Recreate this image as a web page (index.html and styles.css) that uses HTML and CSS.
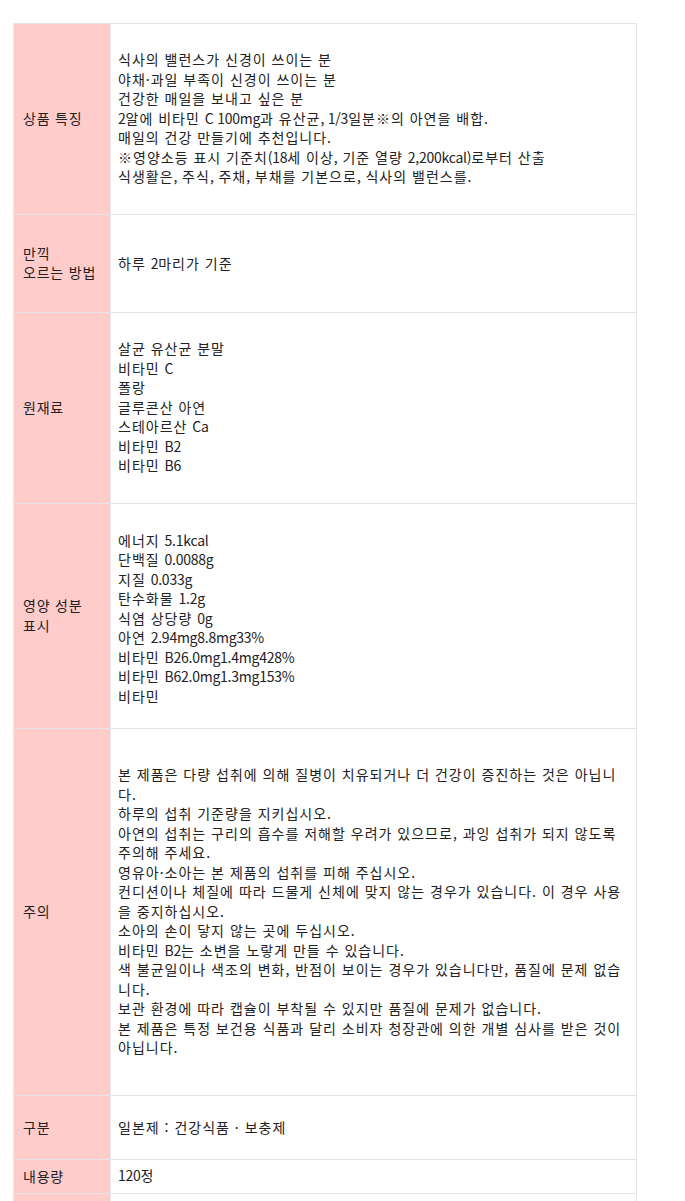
FILE: index.html
```html
<!DOCTYPE html>
<html lang="ko">
<head>
<meta charset="utf-8">
<title>상품 정보</title>
<link rel="stylesheet" href="styles.css">
</head>
<body>
<div class="wrap">
<table class="spec">
  <colgroup><col class="c-label"><col class="c-value"></colgroup>
  <tr class="r-feature">
    <th>상품 특징</th>
    <td>식사의 밸런스가 신경이 쓰이는 분<br>야채·과일 부족이 신경이 쓰이는 분<br>건강한 매일을 보내고 싶은 분<br><span class="lt">2</span>알에 비타민 <span class="lt">C 100mg</span>과 유산균<span class="lt">, 1/3</span>일분※의 아연을 배합<span class="lt">.</span><br>매일의 건강 만들기에 추천입니다<span class="lt">.</span><br>※영양소등 표시 기준치<span class="lt">(18</span>세 이상<span class="lt">,</span> 기준 열량 <span class="lt">2,200kcal)</span>로부터 산출<br>식생활은<span class="lt">,</span> 주식<span class="lt">,</span> 주채<span class="lt">,</span> 부채를 기본으로<span class="lt">,</span> 식사의 밸런스를<span class="lt">.</span></td>
  </tr>
  <tr class="r-usage">
    <th>만끽<br>오르는 방법</th>
    <td>하루 <span class="lt">2</span>마리가 기준</td>
  </tr>
  <tr class="r-ingredients">
    <th>원재료</th>
    <td>살균 유산균 분말<br>비타민 <span class="lt">C</span><br>폴랑<br>글루콘산 아연<br>스테아르산 <span class="lt">Ca</span><br>비타민 <span class="lt">B2</span><br>비타민 <span class="lt">B6</span></td>
  </tr>
  <tr class="r-nutrition">
    <th>영양 성분<br>표시</th>
    <td>에너지 <span class="lt">5.1kcal</span><br>단백질 <span class="lt">0.0088g</span><br>지질 <span class="lt">0.033g</span><br>탄수화물 <span class="lt">1.2g</span><br>식염 상당량 <span class="lt">0g</span><br>아연 <span class="lt">2.94mg8.8mg33%</span><br>비타민 <span class="lt">B26.0mg1.4mg428%</span><br>비타민 <span class="lt">B62.0mg1.3mg153%</span><br>비타민</td>
  </tr>
  <tr class="r-caution">
    <th>주의</th>
    <td>본 제품은 다량 섭취에 의해 질병이 치유되거나 더 건강이 증진하는 것은 아닙니다.<br>하루의 섭취 기준량을 지키십시오.<br>아연의 섭취는 구리의 흡수를 저해할 우려가 있으므로, 과잉 섭취가 되지 않도록 주의해 주세요.<br>영유아·소아는 본 제품의 섭취를 피해 주십시오.<br>컨디션이나 체질에 따라 드물게 신체에 맞지 않는 경우가 있습니다. 이 경우 사용을 중지하십시오.<br>소아의 손이 닿지 않는 곳에 두십시오.<br>비타민 <span class="lt">B2</span>는 소변을 노랗게 만들 수 있습니다.<br>색 불균일이나 색조의 변화, 반점이 보이는 경우가 있습니다만, 품질에 문제 없습니다.<br>보관 환경에 따라 캡슐이 부착될 수 있지만 품질에 문제가 없습니다.<br>본 제품은 특정 보건용 식품과 달리 소비자 청장관에 의한 개별 심사를 받은 것이 아닙니다.</td>
  </tr>
  <tr class="r-type">
    <th>구분</th>
    <td>일본제 : 건강식품 · 보충제</td>
  </tr>
  <tr class="r-volume">
    <th>내용량</th>
    <td><span class="lt">120</span>정</td>
  </tr>
  <tr class="r-more">
    <th>&nbsp;</th>
    <td>&nbsp;</td>
  </tr>
</table>
</div>
</body>
</html>
```

FILE: styles.css
```css
html, body {
  margin: 0;
  padding: 0;
  background: #ffffff;
}

.wrap {
  padding: 23px 0 0 13px;
}

.spec {
  border-collapse: collapse;
  table-layout: fixed;
  width: 623px;
  font-family: "Noto Sans CJK KR", "Noto Sans", sans-serif;
  font-size: 14px;
  letter-spacing: 1px;
  line-height: 19.5px;
  color: #222222;
}

.c-label { width: 97px; }
.c-value { width: 526px; }

.spec th,
.spec td {
  border: 1px solid #e5e5e5;
  vertical-align: middle;
  text-align: left;
  font-weight: normal;
}

.spec th {
  background: #ffcccc;
  padding: 0 4px 0 9px;
  letter-spacing: 0.8px;
}

.spec td {
  background: #ffffff;
  padding: 0 10px 0 7px;
}

.lt {
  letter-spacing: -0.25px;
}

.r-feature td { padding-top: 26px; padding-bottom: 27px; }
.r-usage td { padding-top: 39px; padding-bottom: 39px; }
.r-ingredients td { padding-top: 26px; padding-bottom: 27px; }
.r-nutrition td { padding-top: 27px; padding-bottom: 22px; }
.r-caution td { padding-top: 36px; padding-bottom: 37px; }
.r-type td { padding-top: 22px; padding-bottom: 22px; }
.r-volume td { padding-top: 6px; padding-bottom: 7px; }
.r-more td { padding-top: 20px; padding-bottom: 20px; }
```
